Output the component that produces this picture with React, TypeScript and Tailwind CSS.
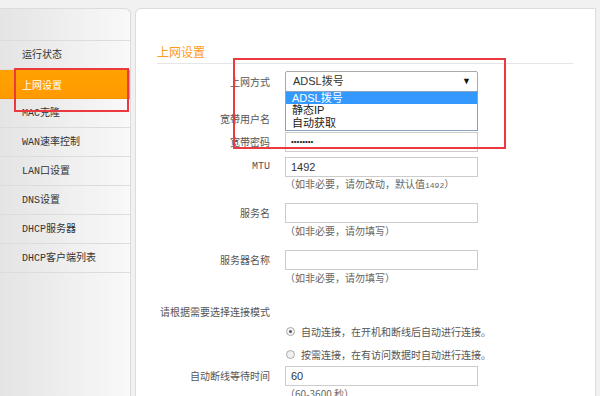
import React from 'react';

const menu = ['运行状态', '上网设置', 'MAC克隆', 'WAN速率控制', 'LAN口设置', 'DNS设置', 'DHCP服务器', 'DHCP客户端列表'];

const cn = { fontFamily: "'Noto Sans CJK SC', sans-serif" };
const mono = { fontFamily: "'Liberation Mono', 'Noto Sans CJK SC', monospace" };
const sans = { fontFamily: "'Liberation Sans', 'Noto Sans CJK SC', sans-serif" };

function Row({ label, mt, h = 20, children }: { label?: string; mt: string; h?: string | number; children?: React.ReactNode }) {
  return (
    <div className={`flex items-center ${mt}`} style={{ height: h }}>
      <div className="w-[113px] text-right text-[10px] text-[#555] leading-none" style={label === 'MTU' ? mono : cn}>
        {label}
      </div>
      <div className="ml-[15px] relative">{children}</div>
    </div>
  );
}

function Input({ value, dots }: { value?: string; dots?: boolean }) {
  return (
    <div className="w-[193px] h-[20px] border border-[#ccc] bg-white flex items-center pl-[5px] text-[11px] text-[#333]" style={sans}>
      {dots ? <span className="text-[8px] text-[#222]">••••••••</span> : value}
    </div>
  );
}

function Hint({ children, mt = '' }: { children: React.ReactNode; mt?: string }) {
  return (
    <div className={`flex h-[15px] items-center ${mt}`}>
      <div className="ml-[128px] text-[10px] text-[#666] leading-none" style={cn}>{children}</div>
    </div>
  );
}

export default function App() {
  return (
    <div className="relative w-[600px] h-[396px] overflow-hidden bg-[#f1f1f1] pt-[8px] flex gap-[4px]">
      {/* sidebar */}
      <div className="w-[131px] h-[400px] rounded-tr-[6px] border-t border-r border-[#dcdcdc] bg-gradient-to-r from-[#e4e4e4] to-[#f9f9f9] pt-[31px]">
        <div className="border-t border-[#dcdcdc]">
          {menu.map((m, i) => (
            <div
              key={m}
              className={`h-[29px] flex items-center pl-[22px] text-[10px] border-b ${
                i === 1
                  ? 'bg-gradient-to-b from-[#ffa200] to-[#ff9a00] text-white border-[#f39000]'
                  : 'text-[#333] border-[#dcdcdc]'
              }`}
              style={i === 1 ? cn : mono}
            >
              {m}
            </div>
          ))}
        </div>
      </div>

      {/* main */}
      <div className="w-[461px] h-[400px] bg-white border-t border-l border-r border-[#dcdcdc] rounded-tl-[6px] pt-[33px] pl-[21px] pr-[22px]">
        <div className="h-[22px] border-b border-[#e6e6e6] text-[12px] text-[#ff9a1a] leading-none pt-[4px]" style={cn}>
          上网设置
        </div>

        <Row label="上网方式" mt="mt-[7px]" h={21}>
          <div className="w-[193px] h-[21px] border border-[#aaa] rounded-[2px] bg-white flex items-center justify-between pl-[7px] pr-[6px] text-[11px] text-[#333]" style={sans}>
            <span>ADSL拨号</span>
            <span className="text-[9px] text-[#111]">▼</span>
          </div>
          <div className="absolute left-0 top-[20px] w-[193px] h-[40px] border border-[#8aa1c4] bg-white text-[11px] leading-[13px] text-[#222] z-10" style={sans}>
            <div className="bg-[#3399ff] text-white pl-[6px] h-[12px] leading-[12px]">ADSL拨号</div>
            <div className="pl-[6px]">静态IP</div>
            <div className="pl-[6px]">自动获取</div>
          </div>
        </Row>
        <Row label="宽带用户名" mt="mt-[17px]">
          <Input />
        </Row>
        <Row label="宽带密码" mt="mt-[3px]">
          <Input dots />
        </Row>
        <Row label="MTU" mt="mt-[5px]">
          <Input value="1492" />
        </Row>
        <Hint>（如非必要，请勿改动，默认值<span className="text-[8px]" style={mono}>1492</span>）</Hint>
        <Row label="服务名" mt="mt-[11px]">
          <Input />
        </Row>
        <Hint>（如非必要，请勿填写）</Hint>
        <Row label="服务器名称" mt="mt-[12px]">
          <Input />
        </Row>
        <Hint>（如非必要，请勿填写）</Hint>
        <Row label="请根据需要选择连接模式" mt="mt-[19px]" h={15} />
        <div className="flex items-center h-[15px] mt-[5px] ml-[129px] text-[10px] text-[#555]" style={cn}>
          <span className="w-[9px] h-[9px] rounded-full border border-[#aaa] bg-[#f4f4f4] flex items-center justify-center mr-[6px]">
            <span className="w-[3px] h-[3px] rounded-full bg-[#555]" />
          </span>
          自动连接，在开机和断线后自动进行连接。
        </div>
        <div className="flex items-center h-[15px] mt-[8px] ml-[129px] text-[10px] text-[#555]" style={cn}>
          <span className="w-[9px] h-[9px] rounded-full border border-[#aaa] bg-[#f0f0f0] mr-[6px]" />
          按需连接，在有访问数据时自动进行连接。
        </div>
        <Row label="自动断线等待时间" mt="mt-[4px]">
          <Input value="60" />
        </Row>
        <Hint>（60-3600 秒）</Hint>
      </div>

      {/* annotation boxes */}
      <div className="absolute left-[14px] top-[68px] w-[115px] h-[44px] border-2 border-[#ea3a3f]" />
      <div className="absolute left-[233px] top-[58px] w-[273px] h-[91px] border-2 border-[#ea3a3f]" />
    </div>
  );
}
